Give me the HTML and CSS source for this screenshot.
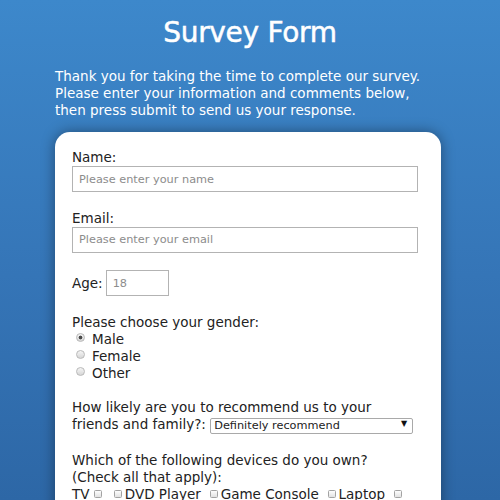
FILE: index.html
```html
<!DOCTYPE html>
<html lang="en">
<head>
<meta charset="utf-8">
<title>Survey Form</title>
<link rel="stylesheet" href="styles.css">
</head>
<body>
<h1 class="title">Survey Form</h1>
<div class="page">
  <p class="intro">Thank you for taking the time to complete our survey. Please enter your information and comments below, then press submit to send us your response.</p>
  <form class="card">
    <div class="field">
      <label class="label" for="name">Name:</label>
      <input class="text-input" id="name" type="text" placeholder="Please enter your name">
    </div>
    <div class="field">
      <label class="label" for="email">Email:</label>
      <input class="text-input" id="email" type="email" placeholder="Please enter your email">
    </div>
    <div class="field row">
      <label class="label" for="age">Age:</label>
      <input class="age-input" id="age" type="text" placeholder="18">
    </div>
    <div class="field">
      <p class="label">Please choose your gender:</p>
      <label class="option"><input class="radio" type="radio" name="gender" checked>Male</label>
      <label class="option"><input class="radio" type="radio" name="gender">Female</label>
      <label class="option"><input class="radio" type="radio" name="gender">Other</label>
    </div>
    <div class="field">
      <label for="recommend">How likely are you to recommend us to your friends and family?:</label>
      <span class="select-wrap"><select class="select" id="recommend">
        <option>Definitely recommend</option>
        <option>Maybe recommend</option>
        <option>Not recommend</option>
      </select></span>
    </div>
    <div class="field">
      <p class="label">Which of the following devices do you own?<br>(Check all that apply):</p>
      <div class="devices">TV<input class="check" type="checkbox"> <input class="check" type="checkbox">DVD Player <input class="check" type="checkbox">Game Console <input class="check" type="checkbox">Laptop <input class="check" type="checkbox"> Tablet <input class="check" type="checkbox"> Smartphone</div>
    </div>
    <div class="field">
      <label class="label" for="comments">Any comments or suggestions?</label>
      <textarea class="comments" id="comments" rows="4"></textarea>
    </div>
    <div class="field">
      <button class="submit" type="submit">Submit</button>
    </div>
  </form>
</div>
</body>
</html>
```
FILE: styles.css
```css
* {
  box-sizing: border-box;
}

html {
  background: linear-gradient(180deg, #3d88cb 0%, #3575b7 55%, #2d67a6 100%) fixed;
}

body {
  margin: 0;
  font-family: "DejaVu Sans", sans-serif;
  font-size: 13.5px;
  line-height: 17px;
  color: #222;
}

.title {
  margin: 16px 0 0;
  text-align: center;
  font-size: 28px;
  line-height: 34px;
  font-weight: normal;
  letter-spacing: -0.3px;
  color: #fff;
  -webkit-text-stroke: 0.5px #fff;
}

.page {
  width: 390px;
  padding-right: 4px;
  margin: 18px auto 0;
}

.intro {
  margin: 0 0 13px;
  color: #fff;
}

.card {
  display: flex;
  flex-direction: column;
  gap: 17.5px;
  padding: 17px 17px 40px;
  background: #fff;
  border-radius: 15px;
  box-shadow: 0 0 14px rgba(0, 0, 0, 0.4);
}

.field {
  width: 346px;
}

.label {
  display: block;
  margin: 0;
}

.text-input,
.age-input {
  display: block;
  height: 26px;
  margin: 0;
  padding: 0 6px;
  border: 1px solid #b3b3b3;
  border-radius: 0;
  font-family: "DejaVu Sans", sans-serif;
  font-size: 11.3px;
  color: #333;
  background: #fff;
}

.text-input {
  width: 346px;
}

.age-input {
  width: 63px;
}

.text-input::placeholder,
.age-input::placeholder {
  color: #8c8c8c;
}

.row {
  display: flex;
  align-items: center;
  gap: 3px;
}

.option {
  display: block;
}

.radio {
  appearance: none;
  display: inline-block;
  width: 9px;
  height: 9px;
  margin: 0 7px 0 4px;
  border: 1px solid #b9b9b9;
  border-radius: 50%;
  background: linear-gradient(#f5f5f5, #d6d6d6);
  vertical-align: 2px;
}

.radio:checked {
  background: radial-gradient(circle, #4a4a4a 0 1.6px, transparent 2.2px), linear-gradient(#f5f5f5, #d6d6d6);
}

.select-wrap {
  position: relative;
  display: inline-block;
}

.select-wrap::after {
  content: "\25BC";
  position: absolute;
  right: 6px;
  top: 3px;
  font-size: 8px;
  line-height: 10px;
  color: #111;
  pointer-events: none;
}

.select {
  appearance: none;
  width: 203px;
  height: 16px;
  margin: 0;
  padding: 0 16px 0 3px;
  border: 1px solid #a9a9a9;
  border-radius: 2px;
  background: #fff;
  font-family: "DejaVu Sans", sans-serif;
  font-size: 11.3px;
  line-height: 14px;
  color: #222;
}

.check {
  appearance: none;
  display: inline-block;
  width: 8px;
  height: 8px;
  margin: 0 3px 0 4.5px;
  border: 1px solid #a3a3a3;
  border-radius: 1.5px;
  background: linear-gradient(#fdfdfd, #e2e2e2);
  vertical-align: 1px;
}

.comments {
  display: block;
  width: 346px;
  border: 1px solid #b3b3b3;
}

.submit {
  font-family: "DejaVu Sans", sans-serif;
  font-size: 13.5px;
  padding: 4px 14px;
}
```
